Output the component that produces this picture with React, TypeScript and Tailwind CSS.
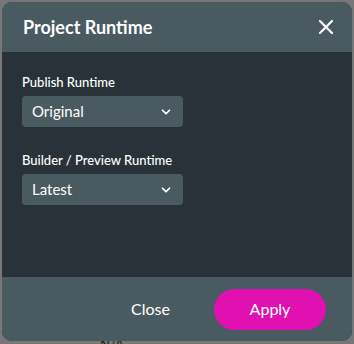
import { ChevronDown, X } from "lucide-react";

function RuntimeSelect({ label, value }: { label: string; value: string }) {
  return (
    <div className="flex flex-col">
      <label className="text-[13px] font-medium leading-4 text-white">{label}</label>
      <button
        type="button"
        className="mt-[6px] flex h-[31px] w-[161px] items-center justify-between rounded-[4px] bg-[#4a5a61] pl-[10px] pr-[10px] text-[15px] text-white"
      >
        <span>{value}</span>
        <ChevronDown size={14} strokeWidth={3} />
      </button>
    </div>
  );
}

export default function App() {
  return (
    <div className="relative h-[344px] w-[354px] bg-[#777777] font-['Lato','Noto_Sans',sans-serif]">
      <div className="absolute left-[100px] top-[336px] text-[13px] leading-4 text-[#222]">N/A</div>
      <div className="absolute left-[2px] top-[2px] flex h-[339px] w-[350px] flex-col overflow-hidden rounded-[10px] bg-[#283238]">
        <div className="flex h-[50px] items-center justify-between bg-[#4a5a61] pl-[21px] pr-[14px]">
          <h2 className="text-[18px] font-bold text-white">Project Runtime</h2>
          <X size={24} strokeWidth={2.2} className="text-white" />
        </div>
        <div className="flex flex-1 flex-col gap-[25px] px-[20px] pt-[22px]">
          <RuntimeSelect label="Publish Runtime" value="Original" />
          <RuntimeSelect label="Builder / Preview Runtime" value="Latest" />
        </div>
        <div className="flex h-[64px] items-center justify-end gap-[44px] bg-[#4a5a61] pr-[26px]">
          <button type="button" className="text-[16px] text-white">
            Close
          </button>
          <button
            type="button"
            className="h-[41px] w-[112px] rounded-full bg-[#e011b0] text-[16px] text-white"
          >
            Apply
          </button>
        </div>
      </div>
    </div>
  );
}
